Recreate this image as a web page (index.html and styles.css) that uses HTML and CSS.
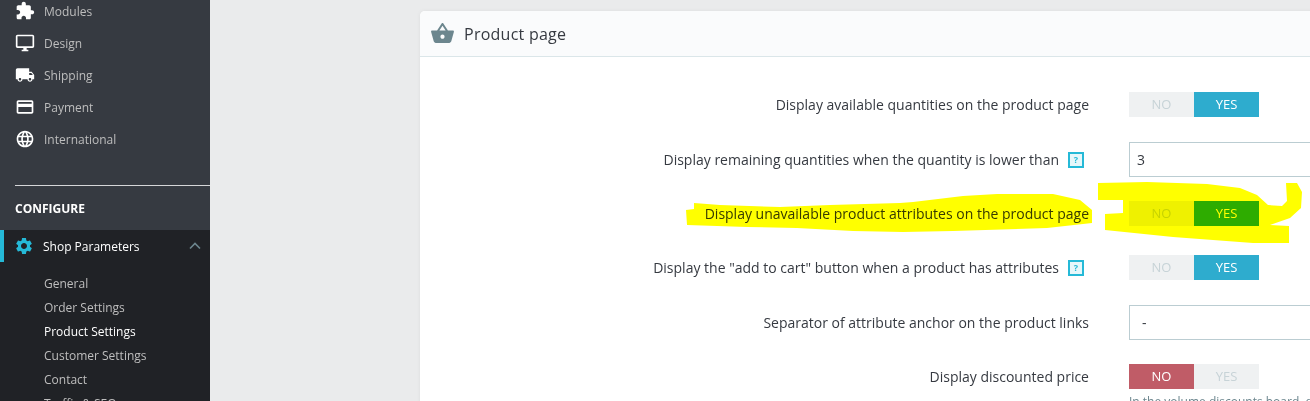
FILE: index.html
```html
<!DOCTYPE html>
<html lang="en">
<head>
    <meta charset="UTF-8">
    <title>Product Settings</title>
    <link rel="stylesheet" href="styles.css">
</head>
<body>
<div class="page">
    <div class="sidebar">
        <ul class="nav">
            <li><svg class="nav_icon" viewBox="0 0 24 24"><path d="M20.5 11H19V7c0-1.1-.9-2-2-2h-4V3.5C13 2.12 11.88 1 10.5 1S8 2.12 8 3.5V5H4c-1.1 0-1.99.9-1.99 2v3.8H3.5c1.49 0 2.7 1.21 2.7 2.7s-1.21 2.7-2.7 2.7H2V20c0 1.1.9 2 2 2h3.8v-1.5c0-1.49 1.21-2.7 2.7-2.7 1.49 0 2.7 1.21 2.7 2.7V22H17c1.1 0 2-.9 2-2v-4h1.5c1.38 0 2.5-1.12 2.5-2.5S21.88 11 20.5 11z"/></svg>Modules</li>
            <li><svg class="nav_icon" viewBox="0 0 24 24"><path d="M21 2H3c-1.1 0-2 .9-2 2v12c0 1.1.9 2 2 2h7v2H8v2h8v-2h-2v-2h7c1.1 0 2-.9 2-2V4c0-1.1-.9-2-2-2zm0 14H3V4h18v12z"/></svg>Design</li>
            <li><svg class="nav_icon" viewBox="0 0 24 24"><path d="M20 8h-3V4H3c-1.1 0-2 .9-2 2v11h2c0 1.66 1.34 3 3 3s3-1.34 3-3h6c0 1.66 1.34 3 3 3s3-1.34 3-3h2v-5l-3-4zM6 18.5c-.83 0-1.5-.67-1.5-1.5s.67-1.5 1.5-1.5 1.5.67 1.5 1.5-.67 1.5-1.5 1.5zm13.5-9l1.96 2.5H17V9.5h2.5zm-1.5 9c-.83 0-1.5-.67-1.5-1.5s.67-1.5 1.5-1.5 1.5.67 1.5 1.5-.67 1.5-1.5 1.5z"/></svg>Shipping</li>
            <li><svg class="nav_icon" viewBox="0 0 24 24"><path d="M20 4H4c-1.11 0-1.99.89-1.99 2L2 18c0 1.11.89 2 2 2h16c1.11 0 2-.89 2-2V6c0-1.11-.89-2-2-2zm0 14H4v-6h16v6zm0-10H4V6h16v2z"/></svg>Payment</li>
            <li><svg class="nav_icon" viewBox="0 0 24 24"><path d="M11.99 2C6.47 2 2 6.48 2 12s4.47 10 9.99 10C17.52 22 22 17.52 22 12S17.52 2 11.99 2zm6.93 6h-2.95c-.32-1.25-.78-2.45-1.38-3.56 1.84.63 3.37 1.91 4.33 3.56zM12 4.04c.83 1.2 1.48 2.53 1.91 3.96h-3.82c.43-1.43 1.08-2.76 1.91-3.96zM4.26 14C4.1 13.36 4 12.69 4 12s.1-1.36.26-2h3.38c-.08.66-.14 1.32-.14 2 0 .68.06 1.34.14 2H4.26zm.82 2h2.95c.32 1.25.78 2.45 1.38 3.56-1.84-.63-3.37-1.9-4.33-3.56zm2.95-8H5.08c.96-1.66 2.49-2.93 4.33-3.56C8.81 5.55 8.35 6.75 8.03 8zM12 19.96c-.83-1.2-1.48-2.53-1.91-3.96h3.82c-.43 1.43-1.08 2.76-1.91 3.96zM14.34 14H9.66c-.09-.66-.16-1.32-.16-2 0-.68.07-1.35.16-2h4.68c.09.65.16 1.32.16 2 0 .68-.07 1.34-.16 2zm.25 5.56c.6-1.11 1.06-2.31 1.38-3.56h2.95c-.96 1.65-2.49 2.93-4.33 3.56zM16.36 14c.08-.66.14-1.32.14-2 0-.68-.06-1.34-.14-2h3.38c.16.64.26 1.31.26 2s-.1 1.36-.26 2h-3.38z"/></svg>International</li>
        </ul>
        <div class="nav_title">CONFIGURE</div>
        <div class="nav_open">
            <div class="nav_parent">
                <svg class="nav_icon gear" viewBox="0 0 24 24"><path d="M19.14 12.94c.04-.3.06-.61.06-.94 0-.32-.02-.64-.07-.94l2.03-1.58c.18-.14.23-.41.12-.61l-1.92-3.32c-.12-.22-.37-.29-.59-.22l-2.39.96c-.5-.38-1.03-.7-1.62-.94l-.36-2.54c-.04-.24-.24-.41-.48-.41h-3.84c-.24 0-.43.17-.47.41l-.36 2.54c-.59.24-1.13.57-1.62.94l-2.39-.96c-.22-.08-.47 0-.59.22L2.74 8.87c-.12.21-.08.47.12.61l2.03 1.58c-.05.3-.09.63-.09.94s.02.64.07.94l-2.03 1.58c-.18.14-.23.41-.12.61l1.92 3.32c.12.22.37.29.59.22l2.39-.96c.5.38 1.03.7 1.62.94l.36 2.54c.05.24.24.41.48.41h3.84c.24 0 .44-.17.47-.41l.36-2.54c.59-.24 1.13-.56 1.62-.94l2.39.96c.22.08.47 0 .59-.22l1.92-3.32c.12-.22.07-.47-.12-.61l-2.01-1.58zM12 15.6c-1.98 0-3.6-1.62-3.6-3.6s1.62-3.6 3.6-3.6 3.6 1.62 3.6 3.6-1.62 3.6-3.6 3.6z"/></svg>
                <span>Shop Parameters</span>
                <svg class="chevron" viewBox="0 0 12 8"><path d="M1 6.5 6 1.5l5 5"/></svg>
            </div>
            <ul class="subnav">
                <li>General</li>
                <li>Order Settings</li>
                <li class="current">Product Settings</li>
                <li>Customer Settings</li>
                <li>Contact</li>
                <li>Traffic &amp; SEO</li>
            </ul>
        </div>
    </div>

    <div class="main">
        <div class="card">
            <div class="card_head">
                <svg class="basket" viewBox="0 0 24 24"><path d="M17.21 9l-4.38-6.56c-.19-.28-.51-.42-.83-.42-.32 0-.64.14-.83.43L6.79 9H2c-.55 0-1 .45-1 1 0 .09.01.18.04.27l2.54 9.27c.23.84 1 1.46 1.92 1.46h13c.92 0 1.69-.62 1.93-1.46l2.54-9.27L23 10c0-.55-.45-1-1-1h-4.79zM9 9l3-4.4L15 9H9zm3 8c-1.1 0-2-.9-2-2s.9-2 2-2 2 .9 2 2-.9 2-2 2z"/></svg>
                <h3>Product page</h3>
            </div>
            <div class="card_body">
                <div class="row">
                    <label>Display available quantities on the product page</label>
                    <div class="toggle"><span>NO</span><span class="yes">YES</span></div>
                </div>
                <div class="row row_input">
                    <label>Display remaining quantities when the quantity is lower than<i class="help">?</i></label>
                    <div class="input">3</div>
                </div>
                <div class="row row_tall">
                    <label>Display unavailable product attributes on the product page</label>
                    <div class="toggle"><span>NO</span><span class="yes">YES</span></div>
                </div>
                <div class="row">
                    <label>Display the "add to cart" button when a product has attributes<i class="help">?</i></label>
                    <div class="toggle"><span>NO</span><span class="yes">YES</span></div>
                </div>
                <div class="row row_input">
                    <label>Separator of attribute anchor on the product links</label>
                    <div class="input input_sep">-</div>
                </div>
                <div class="row">
                    <label>Display discounted price</label>
                    <div>
                        <div class="toggle"><span class="no">NO</span><span>YES</span></div>
                        <p class="hint">In the volume discounts board, display the new price with the applied discount</p>
                    </div>
                </div>
            </div>
        </div>
    </div>
</div>

<!-- marker scribble drawn over the screenshot -->
<svg class="marker" width="1310" height="401" viewBox="0 0 1310 401">
    <path d="M694 203 720 205 780 207 830 205 900 203 913 202 963 196 997 194 1053 194 1080 200 1092 210 1092 223 1047 228 953 231 903 232 853 231 797 228 747 227 687 225 686 210 694 209Z"/>
    <path d="M1098 183 1147 182 1207 184 1240 188 1257 195 1268 205 1282 206 1287 201 1286 183 1297 183 1302 192 1301 208 1290 218 1270 225 1289 226 1289 243 1253 243 1173 237 1105 230 1105 214 1123 213 1123 200 1098 200Z"/>
</svg>
</body>
</html>
```

FILE: styles.css
```css
* {
    margin: 0;
    padding: 0;
    box-sizing: border-box;
}
ul, li {
    list-style: none;
}
html, body {
    height: 100%;
    overflow: hidden;
}
body {
    position: relative;
    font-family: "Open Sans", "Noto Sans", sans-serif;
    color: #363a41;
    background: #eaebec;
}
.page {
    display: flex;
    height: 401px;
}

/* sidebar */
.sidebar {
    width: 210px;
    flex-shrink: 0;
    display: flex;
    flex-direction: column;
    background: #363a41;
    color: #bebebe;
    font-size: 12px;
}
.nav {
    margin-top: -5px;
    padding-bottom: 30px;
    margin-left: 15px;
    border-bottom: 1px solid #d5d6d8;
}
.nav li {
    display: flex;
    align-items: center;
    height: 32px;
}
.nav_icon {
    width: 20px;
    height: 20px;
    margin-right: 9px;
    fill: #fff;
    flex-shrink: 0;
}
.nav_title {
    height: 44px;
    padding-left: 15px;
    line-height: 45px;
    font-size: 12px;
    font-weight: 700;
    color: #fff;
}
.nav_open {
    flex: 1;
    background: #202226;
    overflow: hidden;
}
.nav_parent {
    display: flex;
    align-items: center;
    height: 32px;
    padding-left: 15px;
    border-left: 4px solid #25b9d7;
    margin-bottom: 10px;
    color: #fff;
}
.gear {
    margin-left: -5px;
    margin-right: 9px;
    fill: #25b9d7;
}
.nav_parent span {
    flex: 1;
}
.chevron {
    width: 12px;
    height: 8px;
    margin-right: 9px;
    fill: none;
    stroke: #6c868e;
    stroke-width: 1.6;
}
.subnav li {
    height: 24px;
    line-height: 24px;
    padding-left: 44px;
    font-size: 12px;
}
.subnav .current {
    color: #fff;
}

/* main card */
.main {
    flex: 1;
    min-width: 0;
    padding: 11px 0 0 210px;
    overflow: hidden;
}
.card {
    width: 1000px;
    height: 500px;
    background: #fff;
    border-radius: 5px;
    box-shadow: 0 0 4px rgba(0, 0, 0, 0.06);
}
.card_head {
    display: flex;
    align-items: center;
    height: 46px;
    padding-left: 10px;
    background: #fafbfc;
    border-bottom: 1px solid #dbe6e9;
    border-radius: 5px 5px 0 0;
}
.basket {
    width: 25px;
    height: 25px;
    margin-right: 9px;
    fill: #6c868e;
}
.card_head h3 {
    font-size: 16px;
    font-weight: 400;
    letter-spacing: 0.25px;
    color: #363a41;
}
.card_body {
    padding-top: 35px;
}
.row {
    display: flex;
    align-items: flex-start;
    margin-bottom: 25px;
    font-size: 14px;
}
.row label {
    display: flex;
    align-items: center;
    justify-content: flex-end;
    flex-shrink: 0;
    width: 669px;
    height: 25px;
    margin-right: 40px;
}
.row_input {
    margin-bottom: 24px;
}
.row_input label {
    height: 35px;
}
.row_tall {
    margin-bottom: 29px;
}
.help {
    width: 16px;
    height: 16px;
    margin-left: 9px;
    margin-right: 5px;
    border: 2px solid #25b9d7;
    background: #e6f7fa;
    color: #25b9d7;
    font-size: 9px;
    font-weight: 700;
    font-style: normal;
    line-height: 12px;
    text-align: center;
}
.toggle {
    display: flex;
    width: 130px;
    height: 25px;
    font-size: 13px;
    line-height: 25px;
    text-align: center;
    background: #eff1f2;
    color: #c7d3d7;
}
.toggle span {
    flex: 1;
}
.toggle .yes {
    background: #2eacce;
    color: #fff;
}
.toggle .no {
    background: #c05c67;
    color: #fff;
}
.input {
    flex-shrink: 0;
    width: 300px;
    height: 35px;
    padding-left: 7px;
    border: 1px solid #bbcdd2;
    line-height: 33px;
}
.input_sep {
    padding-left: 12px;
}
.hint {
    width: 600px;
    margin-top: 4px;
    font-size: 12px;
    color: #6c868e;
    white-space: nowrap;
}

/* yellow marker on top */
.marker {
    position: absolute;
    left: 0;
    top: 0;
    mix-blend-mode: multiply;
    pointer-events: none;
}
.marker path {
    fill: #ffff00;
}
```
